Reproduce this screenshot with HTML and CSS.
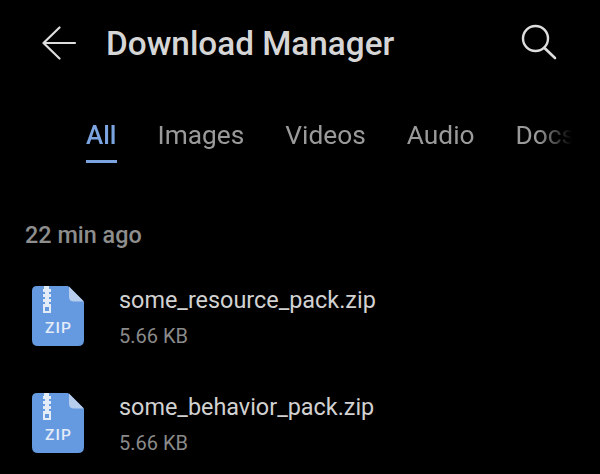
FILE: index.html
```html
<!DOCTYPE html>
<html lang="en">
<head>
    <meta charset="UTF-8">
    <meta name="viewport" content="width=device-width, initial-scale=1.0">
    <title>Download Manager</title>
    <link rel="stylesheet" href="styles.css">
</head>
<body>
    <!-- Top Bar -->
    <div class="top-bar">
        <svg class="back-icon" width="36" height="34" viewBox="0 0 36 34">
            <path d="M17.5 1.5 L1.5 17 L17.5 32.5 M1.5 17 H33" fill="none" stroke="#dedede" stroke-width="2.2" stroke-linecap="round" stroke-linejoin="round"/>
        </svg>
        <h1 class="title">Download Manager</h1>
        <svg class="search-icon" width="38" height="38" viewBox="0 0 38 38">
            <circle cx="14.5" cy="14.5" r="12.5" fill="none" stroke="#dedede" stroke-width="2.4"/>
            <path d="M23.5 24 L34 34" fill="none" stroke="#dedede" stroke-width="2.6" stroke-linecap="round"/>
        </svg>
    </div>

    <!-- Tabs -->
    <div class="tabs">
        <div class="tab active">All</div>
        <div class="tab">Images</div>
        <div class="tab">Videos</div>
        <div class="tab">Audio</div>
        <div class="tab">Docs</div>
    </div>

    <!-- File List -->
    <div class="group-label">22 min ago</div>

    <div class="file-row">
        <svg class="zip-icon" width="53" height="60" viewBox="0 0 53 60">
            <path d="M5 0 H36 L52 16 V54 Q52 60 46 60 H6 Q0 60 0 54 V5 Q0 0 5 0 Z" fill="#659ae0"/>
            <path d="M37 0.5 L52 15.5 H42 Q37 15.5 37 10.5 Z" fill="#b7cdee"/>
            <path d="M12 0 H17 V3 H19 V6 H17 V8 H19 V11 H17 V13 H19 V16 H17 V18 H19 V27 H11 V18 H13 V16 H11 V13 H13 V11 H11 V8 H13 V6 H11 V3 H12 Z" fill="#e4ecf8"/>
            <rect x="13" y="21" width="4" height="4" fill="#659ae0"/>
            <text class="zip-text" x="26.5" y="47" text-anchor="middle">ZIP</text>
        </svg>
        <div class="file-info">
            <div class="file-name">some_resource_pack.zip</div>
            <div class="file-size">5.66 KB</div>
        </div>
    </div>

    <div class="file-row">
        <svg class="zip-icon" width="53" height="60" viewBox="0 0 53 60">
            <path d="M5 0 H36 L52 16 V54 Q52 60 46 60 H6 Q0 60 0 54 V5 Q0 0 5 0 Z" fill="#659ae0"/>
            <path d="M37 0.5 L52 15.5 H42 Q37 15.5 37 10.5 Z" fill="#b7cdee"/>
            <path d="M12 0 H17 V3 H19 V6 H17 V8 H19 V11 H17 V13 H19 V16 H17 V18 H19 V27 H11 V18 H13 V16 H11 V13 H13 V11 H11 V8 H13 V6 H11 V3 H12 Z" fill="#e4ecf8"/>
            <rect x="13" y="21" width="4" height="4" fill="#659ae0"/>
            <text class="zip-text" x="26.5" y="47" text-anchor="middle">ZIP</text>
        </svg>
        <div class="file-info">
            <div class="file-name">some_behavior_pack.zip</div>
            <div class="file-size">5.66 KB</div>
        </div>
    </div>
</body>
</html>
```

FILE: styles.css
```css
body {
    margin: 0;
    height: 474px;
    overflow: hidden;
    background: #000;
    font-family: Roboto, "Noto Sans", sans-serif;
}

.top-bar {
    display: flex;
    align-items: center;
    height: 38px;
    padding: 24px 41px 0 42px;
}

.back-icon {
    flex-shrink: 0;
}

.title {
    flex: 1;
    margin: 0 0 0 28px;
    font-size: 33.3px;
    font-weight: 500;
    color: #d6d6d6;
}

.tabs {
    display: flex;
    gap: 41px;
    margin-top: 55px;
    padding-left: 86px;
    -webkit-mask-image: linear-gradient(to right, #000 538px, transparent 572px);
    mask-image: linear-gradient(to right, #000 538px, transparent 572px);
}

.tab {
    height: 46px;
    font-size: 26.3px;
    line-height: 36px;
    color: #9a9a9a;
    flex-shrink: 0;
}

.tab.active {
    font-size: 26px;
    font-weight: 500;
    color: #7ba4e0;
    border-bottom: 3px solid #7ba4e0;
    height: 43px;
}

.group-label {
    margin: 57px 0 0 25px;
    font-size: 23.4px;
    line-height: 30px;
    font-weight: 500;
    color: #8e8e8e;
}

.file-row {
    display: flex;
    align-items: center;
    height: 60px;
    padding-left: 32px;
    margin-top: 47px;
}

.group-label + .file-row {
    margin-top: 36px;
}

.zip-icon {
    flex-shrink: 0;
}

.zip-text {
    font-family: Roboto, sans-serif;
    font-size: 15.5px;
    font-weight: 500;
    letter-spacing: 1.2px;
    fill: #e4ecf8;
}

.file-info {
    margin-left: 34px;
    padding-top: 2px;
}

.file-name {
    font-size: 23.4px;
    line-height: 30px;
    color: #d2d2d2;
}

.file-size {
    margin-top: 7px;
    font-size: 20px;
    line-height: 28px;
    color: #8a8a8a;
}
```
